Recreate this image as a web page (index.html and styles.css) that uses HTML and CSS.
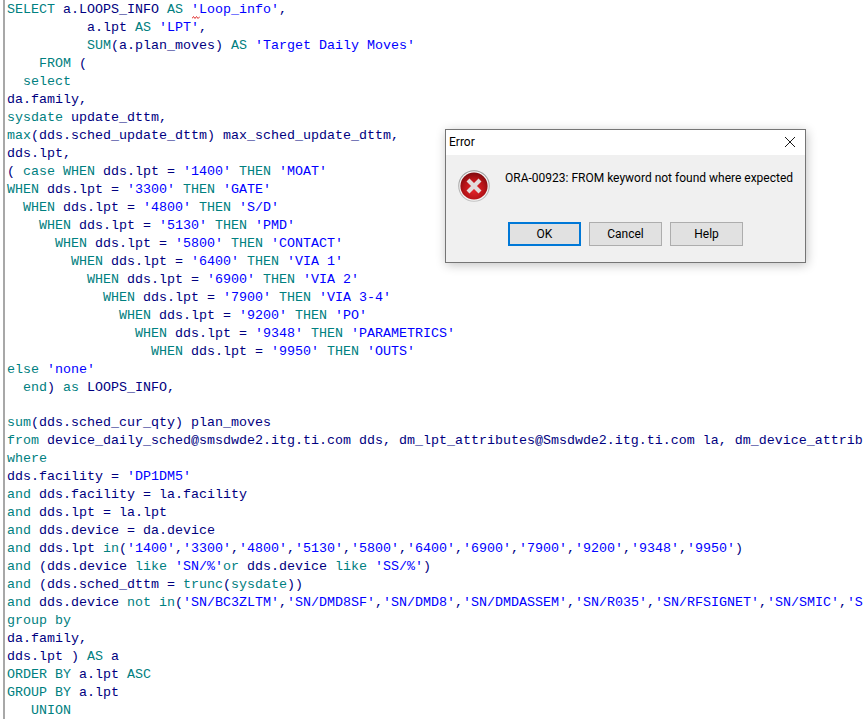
FILE: index.html
```html
<!DOCTYPE html>
<html lang="en">
<head>
<meta charset="utf-8">
<title>SQL editor error</title>
<link rel="stylesheet" href="styles.css">
</head>
<body>
<main class="editor">
<div class="line"><b>SELECT</b> a.LOOPS_INFO <b>AS</b> <i>'Loop_info'</i>,<svg class="squiggle" width="8" height="3" viewBox="0 0 8 3"><path d="M0 2.5 L1.5 .5 L3 2.5 L4.5 .5 L6 2.5 L8 .5" fill="none" stroke="#e03030" stroke-width="1"/></svg></div>
<div class="line">          a.lpt <b>AS</b> <i>'LPT'</i>,</div>
<div class="line">          <b>SUM</b>(a.plan_moves) <b>AS</b> <i>'Target Daily Moves'</i></div>
<div class="line">    <b>FROM</b> (</div>
<div class="line">  <b>select</b></div>
<div class="line">da.family,</div>
<div class="line"><b>sysdate</b> update_dttm,</div>
<div class="line"><b>max</b>(dds.sched_update_dttm) max_sched_update_dttm,</div>
<div class="line">dds.lpt,</div>
<div class="line">( <b>case</b> <b>WHEN</b> dds.lpt = <i>'1400'</i> <b>THEN</b> <i>'MOAT'</i></div>
<div class="line"><b>WHEN</b> dds.lpt = <i>'3300'</i> <b>THEN</b> <i>'GATE'</i></div>
<div class="line">  <b>WHEN</b> dds.lpt = <i>'4800'</i> <b>THEN</b> <i>'S/D'</i></div>
<div class="line">    <b>WHEN</b> dds.lpt = <i>'5130'</i> <b>THEN</b> <i>'PMD'</i></div>
<div class="line">      <b>WHEN</b> dds.lpt = <i>'5800'</i> <b>THEN</b> <i>'CONTACT'</i></div>
<div class="line">        <b>WHEN</b> dds.lpt = <i>'6400'</i> <b>THEN</b> <i>'VIA 1'</i></div>
<div class="line">          <b>WHEN</b> dds.lpt = <i>'6900'</i> <b>THEN</b> <i>'VIA 2'</i></div>
<div class="line">            <b>WHEN</b> dds.lpt = <i>'7900'</i> <b>THEN</b> <i>'VIA 3-4'</i></div>
<div class="line">              <b>WHEN</b> dds.lpt = <i>'9200'</i> <b>THEN</b> <i>'PO'</i></div>
<div class="line">                <b>WHEN</b> dds.lpt = <i>'9348'</i> <b>THEN</b> <i>'PARAMETRICS'</i></div>
<div class="line">                  <b>WHEN</b> dds.lpt = <i>'9950'</i> <b>THEN</b> <i>'OUTS'</i></div>
<div class="line"><b>else</b> <i>'none'</i></div>
<div class="line">  <b>end</b>) <b>as</b> LOOPS_INFO,</div>
<div class="line line-blank"> </div>
<div class="line"><b>sum</b>(dds.sched_cur_qty) plan_moves</div>
<div class="line"><b>from</b> device_daily_sched@smsdwde2.itg.ti.com dds, dm_lpt_attributes@Smsdwde2.itg.ti.com la, dm_device_attributes@Smsdwde2.itg.ti.com da</div>
<div class="line"><b>where</b></div>
<div class="line">dds.facility = <i>'DP1DM5'</i></div>
<div class="line"><b>and</b> dds.facility = la.facility</div>
<div class="line"><b>and</b> dds.lpt = la.lpt</div>
<div class="line"><b>and</b> dds.device = da.device</div>
<div class="line"><b>and</b> dds.lpt <b>in</b>(<i>'1400'</i>,<i>'3300'</i>,<i>'4800'</i>,<i>'5130'</i>,<i>'5800'</i>,<i>'6400'</i>,<i>'6900'</i>,<i>'7900'</i>,<i>'9200'</i>,<i>'9348'</i>,<i>'9950'</i>)</div>
<div class="line"><b>and</b> (dds.device <b>like</b> <i>'SN/%'</i><b>or</b> dds.device <b>like</b> <i>'SS/%'</i>)</div>
<div class="line"><b>and</b> (dds.sched_dttm = <b>trunc</b>(<b>sysdate</b>))</div>
<div class="line"><b>and</b> dds.device <b>not</b> <b>in</b>(<i>'SN/BC3ZLTM'</i>,<i>'SN/DMD8SF'</i>,<i>'SN/DMD8'</i>,<i>'SN/DMDASSEM'</i>,<i>'SN/R035'</i>,<i>'SN/RFSIGNET'</i>,<i>'SN/SMIC'</i>,<i>'SN/TEST'</i>)</div>
<div class="line"><b>group</b> <b>by</b></div>
<div class="line">da.family,</div>
<div class="line">dds.lpt ) <b>AS</b> a</div>
<div class="line"><b>ORDER</b> <b>BY</b> a.lpt <b>ASC</b></div>
<div class="line"><b>GROUP</b> <b>BY</b> a.lpt</div>
<div class="line">   <b>UNION</b></div>
</main>
<section class="dialog" role="alertdialog" aria-label="Error">
  <header class="titlebar">
    <span class="title">Error</span>
    <svg class="close" width="12" height="12" viewBox="0 0 12 12"><path d="M1 1 L11 11 M11 1 L1 11" stroke="#1a1a1a" stroke-width="1" fill="none"/></svg>
  </header>
  <div class="content">
    <div class="message">
      <svg class="icon" width="32" height="32" viewBox="0 0 32 32">
        <defs>
          <radialGradient id="red" cx="50%" cy="62%" r="62%">
            <stop offset="0" stop-color="#e8252b"/>
            <stop offset="0.6" stop-color="#b81418"/>
            <stop offset="1" stop-color="#7d0a0e"/>
          </radialGradient>
          <linearGradient id="ring" x1="0" y1="0" x2="0" y2="1">
            <stop offset="0" stop-color="#9a9a9a"/>
            <stop offset="1" stop-color="#c4c4c4"/>
          </linearGradient>
        </defs>
        <circle cx="16" cy="16" r="15.8" fill="url(#ring)"/>
        <circle cx="16" cy="16" r="14.7" fill="#f6f6f6"/>
        <circle cx="16" cy="16" r="13.6" fill="url(#red)"/>
        <path d="M10 10 L22 22 M22 10 L10 22" stroke="#e2dcdc" stroke-width="4.2" stroke-linecap="butt" fill="none"/>
      </svg>
      <p class="text">ORA-00923: FROM keyword not found where expected</p>
    </div>
    <div class="buttons">
      <button class="btn btn-default" type="button">OK</button>
      <button class="btn" type="button">Cancel</button>
      <button class="btn" type="button">Help</button>
    </div>
  </div>
</section>
</body>
</html>
```
FILE: styles.css
```css
html, body {
  margin: 0;
  padding: 0;
  background: #fff;
}
body {
  position: relative;
  width: 863px;
  height: 719px;
  overflow: hidden;
}
.editor {
  box-sizing: border-box;
  margin-left: 3px;
  border-left: 2px solid #a8a8a8;
  padding: 1px 0 0 2px;
  height: 719px;
  overflow: hidden;
  font-family: "Liberation Mono", monospace;
  font-size: 13.333px;
  color: #000080;
}
.line {
  position: relative;
  height: 18px;
  line-height: 18px;
  white-space: pre;
}
.line-blank {
  height: 17px;
}
.line b {
  font-weight: normal;
  color: #008080;
}
.line i {
  font-style: normal;
  color: #0000ff;
}
.squiggle {
  position: absolute;
  left: 185px;
  top: 15px;
}
.dialog {
  position: absolute;
  left: 445px;
  top: 129px;
  width: 359px;
  height: 132px;
  border: 1px solid #757575;
  background: #f0f0f0;
  box-shadow: 1px 2px 10px rgba(0, 0, 0, 0.24);
  font-family: Roboto, sans-serif;
  font-size: 12px;
  color: #000;
}
.titlebar {
  box-sizing: border-box;
  display: flex;
  align-items: center;
  justify-content: space-between;
  height: 25px;
  padding: 0 9px 1px 3px;
  background: #fff;
}
.close {
  display: block;
}
.content {
  padding: 15px 0 0 12px;
}
.message {
  display: flex;
  gap: 15px;
}
.text {
  margin: 0;
  line-height: 16px;
  white-space: nowrap;
}
.icon {
  display: block;
  flex: none;
}
.buttons {
  display: flex;
  gap: 8px;
  margin: 20px 0 0 50px;
}
.btn {
  box-sizing: border-box;
  width: 73px;
  height: 24px;
  padding: 0;
  border: 1px solid #adadad;
  background: #e1e1e1;
  font: inherit;
  color: #000;
}
.btn-default {
  border: 2px solid #0078d7;
}
```
